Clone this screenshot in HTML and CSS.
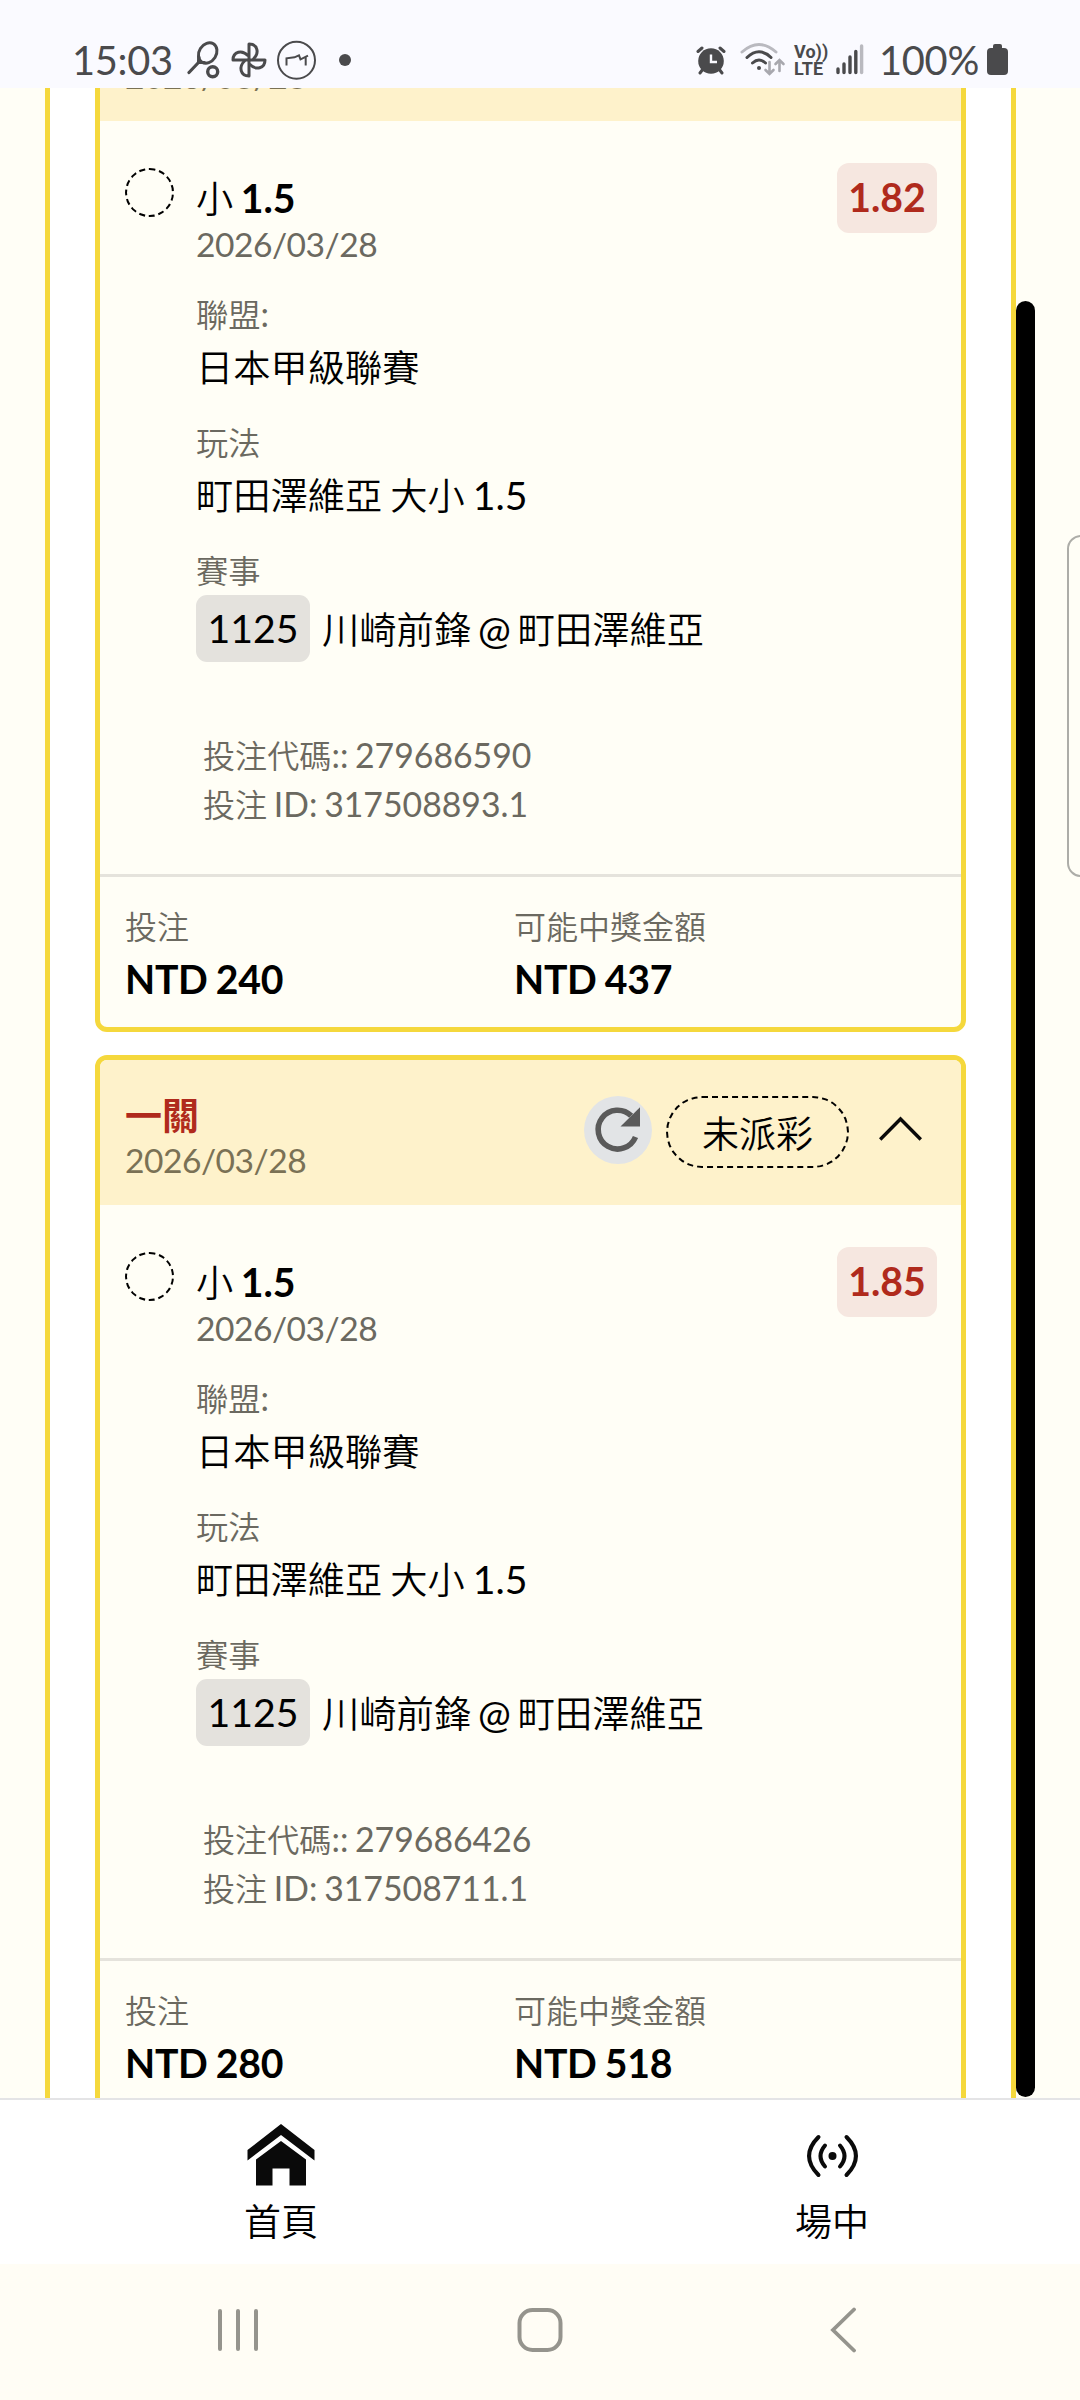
FILE: index.html
```html
<!DOCTYPE html>
<html lang="zh-Hant">
<head>
<meta charset="utf-8">
<title>投注紀錄</title>
<link rel="stylesheet" href="styles.css">
</head>
<body>
<div class="screen">
  <header class="status">
    <div class="status-side">
      <span class="clock">15:03</span>
      <svg class="ic-racket" width="34" height="40" viewBox="0 0 34 40" fill="none" stroke="#4a4a4c" stroke-linecap="round"><ellipse cx="20.700" cy="13" rx="8.600" ry="10.800" transform="rotate(32 20.700 13)" stroke-width="3"/><path d="M11.800 17L11.500 22.500L17.500 22.500M11.500 22.500L2 32.500" stroke-width="3.200"/><circle cx="25.700" cy="31.700" r="5" stroke-width="3.400"/></svg>
      <svg class="ic-fan" width="36" height="38" viewBox="0 0 36 38" fill="none" stroke="#4a4a4c" stroke-width="3" stroke-linejoin="round"><path d="M18 19V3C26.500 3 29 12 22 18.500"/><path d="M18 19V3C26.500 3 29 12 22 18.500" transform="rotate(90 18 19)"/><path d="M18 19V3C26.500 3 29 12 22 18.500" transform="rotate(180 18 19)"/><path d="M18 19V3C26.500 3 29 12 22 18.500" transform="rotate(270 18 19)"/></svg>
      <svg class="ic-round" width="40" height="40" viewBox="0 0 40 40" fill="none" stroke="#4a4a4c" stroke-width="2"><circle cx="19.500" cy="20.300" r="18.500"/><path d="M9.500 25.500V18.300L17.500 17.300L22 15.300L23.500 19.300L31 15.700M28.700 17.500V25.500"/></svg>
      <span class="dot"></span>
    </div>
    <div class="status-side">
      <svg class="ic-alarm" width="30" height="30" viewBox="0 0 30 30"><g fill="none" stroke="#4a4a4c" stroke-width="3" stroke-linecap="round"><path d="M2 6.500L6 3M28 6.500L24 3M7 24L4 28M23 24L26 28"/></g><circle cx="15" cy="16" r="12.800" fill="#4a4a4c"/><path d="M15 9.500V17H21" fill="none" stroke="#fafaff" stroke-width="2.400"/></svg>
      <svg class="ic-wifi" width="46" height="36" viewBox="0 0 46 36" fill="none" stroke-linecap="round" stroke-width="3"><path d="M2 10Q19 -5 36 10" stroke="#b9b9bf"/><path d="M7 15.500Q19 4 31 15.500M12.500 21Q19 15 25.500 21" stroke="#4a4a4c"/><circle cx="19" cy="26" r="2" fill="#4a4a4c"/><path d="M29.500 20V31M25.500 28L29.500 32L33.500 28M39.500 29V19M35.500 22L39.500 18L43.500 22" stroke="#a8a8ae" stroke-width="2.600"/></svg>
      <div class="volte"><span>Vo))</span><span>LTE</span></div>
      <svg class="ic-signal" width="28" height="31" viewBox="0 0 28 31" stroke-width="3.400" stroke-linecap="round"><path d="M2 25V28.500M8 20V28.500M14 13V28.500M19.800 7.500V28.500" stroke="#4a4a4c"/><path d="M25.600 2V28.500" stroke="#b9b9bf"/></svg>
      <span class="battery-text">100%</span>
      <svg class="ic-battery" width="21" height="32" viewBox="0 0 21 32" fill="#4a4a4c"><rect x="6" y="0" width="9" height="8" rx="2"/><rect x="0" y="4" width="21" height="27" rx="4"/></svg>
    </div>
  </header>

  <main class="viewport">
    <div class="panel">
      <article class="card">
        <div class="card-head">
          <div><div class="parlay"></div><div class="date">2026/03/28</div></div>
        </div>
        <div class="card-body">
          <span class="state"></span>
          <div class="bet">
            <div class="pick"><i>小</i> 1.5</div>
            <div class="date">2026/03/28</div>
            <div class="field"><div class="label"><i>聯盟</i>:</div><div class="value"><i>日本甲級聯賽</i></div></div>
            <div class="field"><div class="label"><i>玩法</i></div><div class="value"><i>町田澤維亞</i> <i>大小</i> 1.5</div></div>
            <div class="field"><div class="label"><i>賽事</i></div><div class="match"><span class="code">1125</span><span class="teams"><i>川崎前鋒</i> @ <i>町田澤維亞</i></span></div></div>
            <div class="ids"><div><i>投注代碼</i>:: 279686590</div><div><i>投注</i> ID: 317508893.1</div></div>
          </div>
          <span class="odds">1.82</span>
        </div>
        <div class="card-foot">
          <div><div class="label"><i>投注</i></div><div class="amount">NTD 240</div></div>
          <div><div class="label"><i>可能中獎金額</i></div><div class="amount">NTD 437</div></div>
        </div>
      </article>

      <article class="card">
        <div class="card-head">
          <div><div class="parlay">一關</div><div class="date">2026/03/28</div></div>
          <div class="actions">
            <span class="refresh"><svg width="68" height="68" viewBox="0 0 68 68"><path d="M51.500 41A19.400 19.400 0 1 1 47.200 19.800" fill="none" stroke="#5a5a5a" stroke-width="5.600"/><path d="M56 11.300V30.500H36.500Z" fill="#5a5a5a"/></svg></span>
            <span class="pill">未派彩</span>
            <svg class="chevron" width="43" height="26" viewBox="0 0 43 26" fill="none" stroke="#0a0a0a" stroke-width="3.400"><path d="M1.200 23.500L21.500 3L41.800 23.500"/></svg>
          </div>
        </div>
        <div class="card-body">
          <span class="state"></span>
          <div class="bet">
            <div class="pick"><i>小</i> 1.5</div>
            <div class="date">2026/03/28</div>
            <div class="field"><div class="label"><i>聯盟</i>:</div><div class="value"><i>日本甲級聯賽</i></div></div>
            <div class="field"><div class="label"><i>玩法</i></div><div class="value"><i>町田澤維亞</i> <i>大小</i> 1.5</div></div>
            <div class="field"><div class="label"><i>賽事</i></div><div class="match"><span class="code">1125</span><span class="teams"><i>川崎前鋒</i> @ <i>町田澤維亞</i></span></div></div>
            <div class="ids"><div><i>投注代碼</i>:: 279686426</div><div><i>投注</i> ID: 317508711.1</div></div>
          </div>
          <span class="odds">1.85</span>
        </div>
        <div class="card-foot">
          <div><div class="label"><i>投注</i></div><div class="amount">NTD 280</div></div>
          <div><div class="label"><i>可能中獎金額</i></div><div class="amount">NTD 518</div></div>
        </div>
      </article>
    </div>
    <span class="scrollbar"></span>
    <span class="edge-handle"></span>
  </main>

  <nav class="tabs">
    <a class="tab"><svg width="68" height="62" viewBox="0 0 68 62" fill="#0a0a0a"><path d="M34 0L67.500 26V36.500L34 11L.5 36.500V26Z"/><path d="M34 17L59 35.500V61.500H42.500V44.500H25.500V61.500H9V35.500Z"/></svg><span>首頁</span></a>
    <a class="tab"><svg width="68" height="62" viewBox="0 0 68 62" fill="none" stroke="#0a0a0a" stroke-width="4" stroke-linecap="round"><circle cx="34.500" cy="32" r="4" fill="#0a0a0a" stroke="none"/><path d="M27 21.500Q18 32 27 42.500M42 21.500Q51 32 42 42.500M20.500 13Q1.500 32 20.500 51M48.500 13Q67.500 32 48.500 51"/></svg><span>場中</span></a>
  </nav>

  <footer class="sysnav">
    <svg width="40" height="44" viewBox="0 0 40 44" stroke="#95948d" stroke-width="4" stroke-linecap="round"><path d="M2 3V41M20 3V41M38 3V41"/></svg>
    <svg class="home" width="46" height="46" viewBox="0 0 46 46" fill="none" stroke="#95948d" stroke-width="4"><rect x="2.500" y="3" width="41" height="40" rx="13"/></svg>
    <svg class="back" width="26" height="46" viewBox="0 0 26 46" fill="none" stroke="#95948d" stroke-width="3.800" stroke-linecap="round"><path d="M24 2.500L3 23L24 43.500"/></svg>
  </footer>
</div>
</body>
</html>
```
FILE: styles.css
```css
* { box-sizing: border-box; }
body { margin: 0; font-family: Lato, "Noto Sans CJK TC", sans-serif; color: #000; }
svg { display: block; flex: none; }
i { font-style: normal; font-size: .95em; font-weight: 350; line-height: 0; letter-spacing: 0; }

.screen { width: 1080px; height: 2400px; overflow: hidden; display: flex; flex-direction: column; background: #fffef6; }

.status { height: 88px; flex: none; background: #fafaff; display: flex; justify-content: space-between; padding: 31px 72px 0 72px; color: #4a4a4c; }
.status-side { display: flex; align-items: center; height: 57px; }
.clock, .battery-text { font-size: 39.8px; line-height: 56px; letter-spacing: -.3px; }
.clock { width: 99px; }
.ic-racket { margin-left: 16px; }
.ic-fan { margin-left: 10px; }
.ic-round { margin-left: 10px; }
.dot { width: 12px; height: 12px; border-radius: 50%; background: #4a4a4c; margin-left: 22px; }
.ic-wifi { margin-left: 14px; }
.volte { display: flex; flex-direction: column; margin-left: 8px; width: 31px; font: 700 18px/17px Roboto, sans-serif; }
.ic-signal { margin-left: 11px; }
.battery-text { margin-left: 15px; }
.ic-battery { margin-left: 8px; }

.viewport { position: relative; height: 2010px; flex: none; overflow: hidden; }
.panel { margin: -117px 64px 0 45px; padding: 0 45px; border: solid #f5d83c; border-width: 0 5px; background: #fff; display: flex; flex-direction: column; gap: 23px; }
.card { height: 1061px; flex: none; border: 5px solid #f5d83c; border-radius: 12px; background: #fffef6; overflow: hidden; }

.card-head { height: 145px; background: #fef2cb; display: flex; justify-content: space-between; padding: 35px 39px 0 25px; }
.parlay { height: 41px; font-size: 37px; line-height: 41px; font-weight: 700; color: #b02a1c; }
.date { font-size: 33.6px; line-height: 49px; letter-spacing: -.5px; color: #6b6960; }
.card-head .date { color: #7a7155; }
.actions { display: flex; align-items: flex-start; padding-top: 1px; }
.refresh { width: 68px; height: 68px; border-radius: 50%; background: #e2e4e6; }
.pill { width: 183px; height: 72px; margin-left: 14px; border: 2px dashed #000; border-radius: 36px; text-align: center; font-size: 37px; line-height: 72px; font-weight: 350; }
.chevron { margin: 20px 0 0 30px; }

.card-body { height: 753px; display: flex; padding: 42px 24px 0 25px; }
.state { width: 49px; height: 49px; margin-top: 5px; border: 2px dashed #000; border-radius: 50%; }
.bet { flex: 1; padding: 13px 0 0 22px; }
.pick { font-size: 39.2px; line-height: 44px; font-weight: 700; word-spacing: -2px; }
.field { margin-top: 22px; height: 106px; }
.date + .field { margin-top: 20px; }
.label { font-size: 34px; line-height: 49px; color: #6b6960; }
.value { font-size: 39.2px; line-height: 57px; word-spacing: -2px; }
.match { display: flex; align-items: center; gap: 12px; font-size: 39.2px; line-height: 67px; word-spacing: -3px; }
.code { width: 114px; height: 67px; border-radius: 11px; background: #e4e2dd; text-align: center; line-height: 66px; }
.teams { padding-top: 1px; }
.ids { margin-top: 80px; padding-left: 7px; font-size: 33.8px; line-height: 49px; word-spacing: -2px; color: #6b6960; }
.odds { width: 100px; height: 70px; border-radius: 12px; background: #f6e7e0; color: #b02a1c; font-size: 39.2px; line-height: 68px; font-weight: 700; text-align: center; }

.card-foot { height: 153px; border-top: 3px solid #e5e3dc; display: grid; grid-template-columns: 389px 1fr; padding: 25px 24px 0 25px; }
.card-foot .label { font-size: 33.7px; }
.amount { font-size: 39.2px; line-height: 56px; font-weight: 700; letter-spacing: -.3px; word-spacing: -1px; }

.scrollbar { position: absolute; left: 1016px; top: 213px; width: 19px; height: 1796px; border-radius: 10px; background: #000; }
.edge-handle { position: absolute; left: 1067px; top: 447px; width: 40px; height: 342px; border: 2px solid #adada8; border-radius: 14px; }

.tabs { height: 166px; flex: none; background: #fff; border-top: 2px solid #e4e4e6; display: flex; justify-content: space-between; padding: 24px 211px 0 244px; }
.tab { display: flex; flex-direction: column; align-items: center; width: 74px; }
.tab span { font-size: 37px; line-height: 52px; font-weight: 350; margin-top: 10px; }

.sysnav { height: 136px; flex: none; display: flex; align-items: center; padding: 0 0 4px 218px; background: #fffdf5; }
.home { margin-left: 259px; }
.back { margin-left: 267px; }
```
